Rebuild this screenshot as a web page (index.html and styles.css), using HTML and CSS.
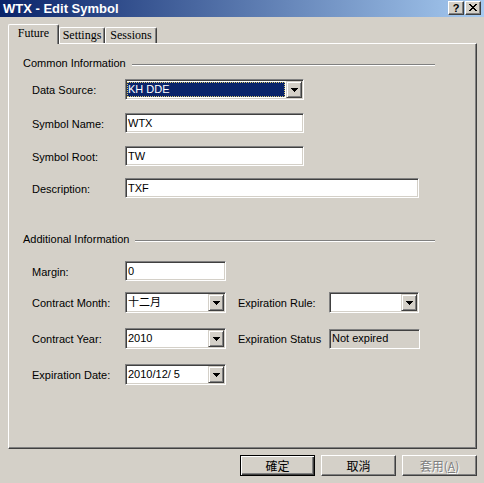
FILE: index.html
```html
<!DOCTYPE html>
<html>
<head>
<meta charset="utf-8">
<title>WTX - Edit Symbol</title>
<link rel="stylesheet" href="styles.css">
</head>
<body>
<div class="window">
  <div class="titlebar">
    <span class="title">WTX - Edit Symbol</span>
    <div class="caption-btns">
      <span class="cbtn help">?</span>
      <span class="cbtn close"><svg width="8" height="7" viewBox="0 0 8 7"><path d="M0 0h2v1h1v1h2v-1h1v-1h2v1h-1v1h-1v1h-1v1h1v1h1v1h1v1h-2v-1h-1v-1h-2v1h-1v1h-2v-1h1v-1h1v-1h1v-1h-1v-1h-1v-1h-1z" fill="#000"/></svg></span>
    </div>
  </div>

  <div class="tabs">
    <div class="tab active t-future">Future</div>
    <div class="tab t-settings">Settings</div>
    <div class="tab t-sessions">Sessions</div>
  </div>

  <div class="panel">
    <div class="group-head head-common"><span>Common Information</span><i class="rule"></i></div>

    <div class="row r-ds">
      <label class="lbl">Data Source:</label>
      <div class="combo w179"><span class="val sel">KH DDE</span><span class="arrow"><svg width="7" height="4" viewBox="0 0 7 4"><path d="M0 0h7v1h-1v1h-1v1h-1v1h-1v-1h-1v-1h-1v-1h-1z" fill="#000"/></svg></span></div>
    </div>
    <div class="row r-sn">
      <label class="lbl">Symbol Name:</label>
      <div class="field w179">WTX</div>
    </div>
    <div class="row r-sr">
      <label class="lbl">Symbol Root:</label>
      <div class="field w179">TW</div>
    </div>
    <div class="row r-desc">
      <label class="lbl">Description:</label>
      <div class="field w294">TXF</div>
    </div>

    <div class="group-head head-add"><span>Additional Information</span><i class="rule"></i></div>

    <div class="row r-margin">
      <label class="lbl">Margin:</label>
      <div class="field w101">0</div>
    </div>
    <div class="row r-cm">
      <label class="lbl">Contract Month:</label>
      <div class="combo w101"><span class="val">十二月</span><span class="arrow"><svg width="7" height="4" viewBox="0 0 7 4"><path d="M0 0h7v1h-1v1h-1v1h-1v1h-1v-1h-1v-1h-1v-1h-1z" fill="#000"/></svg></span></div>
      <label class="lbl lbl-right">Expiration Rule:</label>
      <div class="combo w90"><span class="val"></span><span class="arrow"><svg width="7" height="4" viewBox="0 0 7 4"><path d="M0 0h7v1h-1v1h-1v1h-1v1h-1v-1h-1v-1h-1v-1h-1z" fill="#000"/></svg></span></div>
    </div>
    <div class="row r-cy">
      <label class="lbl">Contract Year:</label>
      <div class="combo w101"><span class="val">2010</span><span class="arrow"><svg width="7" height="4" viewBox="0 0 7 4"><path d="M0 0h7v1h-1v1h-1v1h-1v1h-1v-1h-1v-1h-1v-1h-1z" fill="#000"/></svg></span></div>
      <label class="lbl lbl-right">Expiration Status</label>
      <div class="field w91 disabled">Not expired</div>
    </div>
    <div class="row r-ed">
      <label class="lbl">Expiration Date:</label>
      <div class="combo w101"><span class="val pre">2010/12/ 5</span><span class="arrow"><svg width="7" height="4" viewBox="0 0 7 4"><path d="M0 0h7v1h-1v1h-1v1h-1v1h-1v-1h-1v-1h-1v-1h-1z" fill="#000"/></svg></span></div>
    </div>
  </div>

  <div class="buttons">
    <button class="btn default">確定</button>
    <button class="btn">取消</button>
    <button class="btn disabled">套用(<u>A</u>)</button>
  </div>
</div>
</body>
</html>
```

FILE: styles.css
```css
* {
  box-sizing: border-box;
  margin: 0;
  padding: 0;
}

html, body {
  width: 484px;
  height: 483px;
  overflow: hidden;
}

body {
  background: #d4d0c8;
  font-family: "Liberation Sans", Arial, "Noto Sans CJK TC", sans-serif;
  font-size: 11px;
  color: #000;
}

.window {
  display: flex;
  flex-direction: column;
  width: 484px;
  height: 483px;
}

/* Title bar */
.titlebar {
  height: 17px;
  flex: none;
  background: linear-gradient(to right, #0a246a 0%, #a6caf0 100%);
  display: flex;
  align-items: flex-start;
  justify-content: space-between;
  padding: 0 3px 0 3px;
}

.title {
  color: #fff;
  font-weight: bold;
  font-size: 13px;
  line-height: 17px;
  white-space: nowrap;
}

.caption-btns {
  display: flex;
  gap: 1px;
  margin-top: 1px;
}

.cbtn {
  width: 16px;
  height: 14px;
  background: #d4d0c8;
  border-top: 1px solid #fff;
  border-left: 1px solid #fff;
  border-right: 1px solid #404040;
  border-bottom: 1px solid #404040;
  box-shadow: inset -1px -1px #808080;
  display: flex;
  align-items: center;
  justify-content: center;
  font-weight: bold;
  font-size: 11px;
  line-height: 12px;
  color: #000;
}

.cbtn svg {
  display: block;
  margin-top: -1px;
}

/* Tabs */
.tabs {
  display: flex;
  align-items: flex-end;
  height: 26px;
  flex: none;
  padding-left: 8px;
  position: relative;
  z-index: 1;
}

.tab {
  height: 16px;
  font-family: "Liberation Serif", "Times New Roman", serif;
  font-size: 12px;
  line-height: 14px;
  text-align: center;
  background: #d4d0c8;
  border-top: 1px solid #fff;
  border-left: 1px solid #fff;
  border-right: 1px solid #404040;
  box-shadow: inset -1px 0 #808080;
  border-radius: 2px 2px 0 0;
}

.tab.active {
  height: 20px;
  margin-bottom: -1px;
  line-height: 17px;
}

.t-future { width: 51px; }
.t-settings { width: 46px; }
.t-sessions { width: 52px; }

/* Panel */
.panel {
  flex: none;
  margin-left: 8px;
  width: 469px;
  height: 406px;
  border-top: 1px solid #fff;
  border-left: 1px solid #fff;
  border-right: 1px solid #404040;
  border-bottom: 1px solid #404040;
  box-shadow: inset -1px -1px #808080;
  display: flex;
  flex-direction: column;
}

.group-head {
  display: flex;
  align-items: flex-start;
  width: 412px;
  margin-left: 14px;
  height: 14px;
  line-height: 14px;
  white-space: nowrap;
}

.group-head .rule {
  flex: 1;
  height: 2px;
  margin-left: 6px;
  margin-top: 8px;
  border-top: 1px solid #808080;
  border-bottom: 1px solid #fff;
}

.head-common { margin-top: 12px; }
.head-add { margin-top: 34px; }

.row {
  display: flex;
  align-items: center;
  padding-left: 23px;
}

.lbl {
  width: 93px;
  flex: none;
  white-space: nowrap;
  line-height: 14px;
  padding-top: 1px;
}

.lbl-right {
  width: 91px;
  margin-left: 12px;
}

.r-ds { margin-top: 9px; }
.r-sn { margin-top: 13px; }
.r-sr { margin-top: 13px; }
.r-desc { margin-top: 12px; }
.r-margin { margin-top: 15px; }
.r-cm { margin-top: 11px; }
.r-cy { margin-top: 15px; }
.r-ed { margin-top: 15px; }

/* Sunken fields */
.field,
.combo {
  flex: none;
  background: #fff;
  border-top: 1px solid #808080;
  border-left: 1px solid #808080;
  border-right: 1px solid #fff;
  border-bottom: 1px solid #fff;
  box-shadow: inset 1px 1px #404040, inset -1px -1px #d4d0c8;
  white-space: nowrap;
}

.field {
  height: 20px;
  padding: 2px 2px 0 2px;
  line-height: 15px;
}

.field.disabled {
  background: #d4d0c8;
  padding-top: 1px;
  line-height: 14px;
}

.combo {
  height: 21px;
  padding: 1px;
  display: flex;
  align-items: stretch;
}

.combo .val {
  flex: 1;
  padding-left: 1px;
  line-height: 17px;
  overflow: hidden;
}

.combo .val.pre {
  white-space: pre;
}

.combo .val.sel {
  background: #0a246a;
  color: #fff;
  margin: 1px 1px 1px 0;
  line-height: 15px;
  outline: 1px dotted #d8c870;
  outline-offset: -1px;
}

.arrow {
  width: 16px;
  flex: none;
  background: #d4d0c8;
  border-top: 1px solid #d4d0c8;
  border-left: 1px solid #d4d0c8;
  border-right: 1px solid #404040;
  border-bottom: 1px solid #404040;
  box-shadow: inset 1px 1px #fff, inset -1px -1px #808080;
  display: flex;
  align-items: center;
  justify-content: center;
}

.arrow svg {
  display: block;
}

.w179 { width: 179px; }
.w294 { width: 294px; }
.w101 { width: 101px; }
.w90 { width: 90px; }
.w91 { width: 91px; }

/* Buttons */
.buttons {
  display: flex;
  justify-content: flex-end;
  gap: 6px;
  margin-top: 6px;
  padding-right: 7px;
}

.btn {
  width: 75px;
  height: 21px;
  background: #d4d0c8;
  font-family: "Noto Sans CJK TC", "Liberation Sans", sans-serif;
  font-size: 12px;
  line-height: 17px;
  color: #000;
  border-top: 1px solid #fff;
  border-left: 1px solid #fff;
  border-right: 1px solid #404040;
  border-bottom: 1px solid #404040;
  box-shadow: inset -1px -1px #808080;
}

.btn.default {
  border: 1px solid #000;
  box-shadow: inset 1px 1px #fff, inset -1px -1px #404040, inset -2px -2px #808080;
}

.btn.disabled {
  color: #808080;
  text-shadow: 1px 1px #fff;
}
```
